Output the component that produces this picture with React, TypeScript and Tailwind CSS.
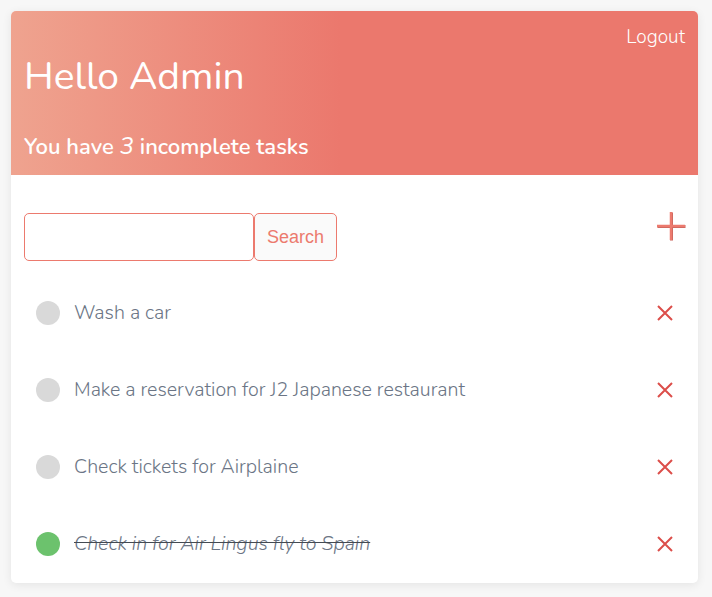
import React from "react";

const tasks = [
  { title: "Wash a car", done: false },
  { title: "Make a reservation for J2 Japanese restaurant", done: false },
  { title: "Check tickets for Airplaine", done: false },
  { title: "Check in for Air Lingus fly to Spain", done: true },
];

export default function App() {
  return (
    <div className="min-h-[597px] bg-[#f7f7f7] p-[11px] pr-[14px] font-['Nunito','Lato',sans-serif]">
      <div className="bg-white rounded-[5px] shadow-[0_2px_10px_rgba(0,0,0,0.08)] overflow-hidden">
        {/* Header */}
        <div className="h-[164px] bg-[linear-gradient(to_right,#efa38f_0%,#eb786d_48%,#eb786d_100%)] text-white px-[13px] pt-[13px] flex flex-col">
          <div className="flex justify-end">
            <span className="text-[19px] font-light leading-[26px]">Logout</span>
          </div>
          <h1 className="text-[39px] font-normal leading-[46px] mt-[4px]">Hello Admin</h1>
          <p className="text-[22px] font-semibold leading-[28px] mt-[32px]">
            You have <em className="font-normal text-[24px]">3</em> incomplete tasks
          </p>
        </div>

        {/* Body */}
        <div className="px-[13px] pt-[38px] pb-[1px]">
          <div className="flex items-center justify-between">
            <div className="flex">
              <input
                className="w-[230px] h-[48px] border border-[#ec7a6e] rounded-[5px] outline-none px-3"
                type="text"
              />
              <button className="h-[48px] px-[12px] border border-[#ec7a6e] rounded-[5px] bg-[#fafafa] text-[#ec7a6e] text-[18px] font-['Liberation_Sans',sans-serif]">
                Search
              </button>
            </div>
            <svg width="30" height="30" viewBox="0 0 30 30" className="-mr-[1px] -mt-[22px]">
              <path d="M15 1 V29 M1 15 H29" stroke="#c9655c" strokeWidth="3" transform="translate(0.5,0.5)" />
              <path d="M15 1 V29 M1 15 H29" stroke="#ec7a6e" strokeWidth="2.5" />
            </svg>
          </div>

          <ul className="mt-[13px]">
            {tasks.map((t) => (
              <li key={t.title} className="h-[77px] flex items-center pl-[12px] pr-[12px]">
                <span
                  className={`w-[24px] h-[24px] rounded-full shrink-0 ${t.done ? "bg-[#6cc26d]" : "bg-[#d9d9d9]"}`}
                />
                <span
                  className={`ml-[14px] text-[19.6px] font-light text-[#6b7585] flex-1 ${t.done ? "italic line-through decoration-[#444a52]" : ""}`}
                >
                  {t.title}
                </span>
                <svg width="16" height="16" viewBox="0 0 16 16">
                  <path d="M1 1 L15 15 M15 1 L1 15" stroke="#dc4e4a" strokeWidth="2" />
                </svg>
              </li>
            ))}
          </ul>
        </div>
      </div>
    </div>
  );
}
